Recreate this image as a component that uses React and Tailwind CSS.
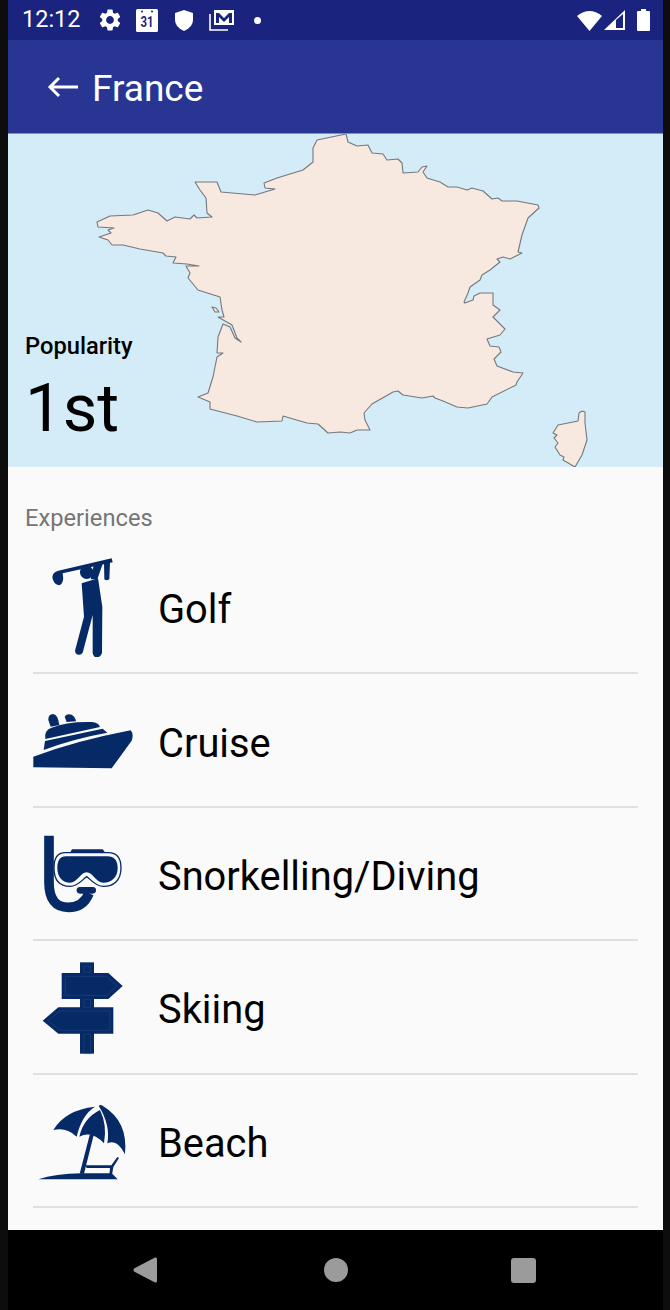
import React from "react";

const NAVY = "#062a66";

const FRANCE =
  "M346 134 L317 140 L313 148 L313 162 L303 170 L277 178 L264 183 L265 188 L275 189 L255 195 L221 192 L217 182 L195 182 L200 190 L206 198 L207 213 L212 217 L197 218 L194 215 L190 219 L175 217 L167 221 L158 213 L148 210 L133 215 L110 216 L97 222 L98 227 L114 228 L108 230 L111 233 L99 237 L108 240 L112 245 L123 245 L140 249 L163 253 L166 256 L176 257 L173 263 L187 264 L199 266 L186 266 L190 273 L188 278 L198 290 L220 297 L222 310 L224 317 L218 317 L232 325 L237 338 L241 342 L235 338 L230 327 L223 324 L218 337 L217 353 L223 353 L217 357 L213 377 L208 393 L198 397 L210 402 L210 409 L237 416 L257 422 L282 421 L283 416 L307 423 L318 424 L328 433 L340 432 L350 433 L357 430 L370 430 L365 420 L364 413 L372 404 L393 392 L398 391 L403 395 L422 398 L433 396 L435 398 L443 401 L457 407 L468 408 L487 404 L492 397 L516 385 L517 382 L523 373 L513 372 L497 366 L494 359 L501 352 L499 347 L490 346 L487 339 L500 335 L505 329 L493 317 L500 310 L493 305 L493 293 L480 293 L474 296 L473 300 L465 303 L464 302 L468 293 L470 287 L480 280 L482 275 L490 270 L500 262 L497 259 L503 257 L510 259 L522 253 L518 252 L522 235 L528 218 L539 208 L538 205 L517 201 L502 201 L498 198 L492 199 L483 191 L472 188 L467 190 L457 187 L448 187 L440 182 L427 178 L423 172 L427 166 L422 167 L418 172 L403 173 L402 163 L398 159 L387 160 L383 154 L372 153 L368 145 L357 146 L348 142 Z";

const CORSICA =
  "M582 411 L585 412 L585 423 L587 440 L582 455 L575 467 L563 460 L564 457 L560 455 L555 447 L558 443 L554 438 L557 435 L553 433 L558 425 L578 421 L579 413 Z";

const GolfIcon = () => (
  <svg viewBox="39 21 300 300" className="w-[100px] h-[100px]" fill={NAVY}>
    <path d="M115 62 L275 25 L278 37 L128 70 Q134 100 118 106 Q100 104 97 82 Q98 66 115 62 Z" />
    <circle cx="200" cy="67" r="20" />
    <path d="M222 42 L250 36 L232 88 L212 88 Z" />
    <path d="M252 38 L270 36 L268 88 Q260 94 253 88 Z" />
    <path d="M185 100 L234 85 L247 170 L246 310 Q240 324 226 322 Q219 318 218 310 L218 195 L188 308 Q178 320 167 310 L165 302 L192 200 Z" />
  </svg>
);

const CruiseIcon = () => (
  <svg viewBox="39 420 300 300" className="w-[100px] h-[100px]" fill={NAVY}>
    <path d="M85 510 Q84 492 100 492 Q114 494 118 525 L92 530 Z" />
    <path d="M134 500 Q140 490 155 494 Q166 500 168 514 L140 516 Z" />
    <path d="M76 567 Q72 540 95 533 Q140 514 215 516 Q236 518 240 531 Z" />
    <path d="M71 600 L75 573 L248 536 L262 548 Q160 566 71 600 Z" />
    <path d="M40 620 Q170 572 332 541 Q342 552 335 572 L275 655 L40 652 Z" />
  </svg>
);

const SnorkelIcon = () => (
  <svg viewBox="39 -3 300 300" className="w-[100px] h-[100px]">
    <path d="M87 35 V175 Q87 250 145 250 Q190 250 207 208" fill="none" stroke={NAVY} strokeWidth="29" />
    <rect x="170" y="189" width="58" height="20" rx="10" fill={NAVY} />
    <path d="M150 86 L156 76 H248 L256 86 Z" fill={NAVY} />
    <path d="M135 86 H265 C292 86 303 105 303 132 C303 170 280 187 250 187 C225 187 215 168 200 158 C185 168 175 187 150 187 C120 187 102 170 102 132 C102 105 112 86 135 86 Z" fill="#fafafa" stroke={NAVY} strokeWidth="4" />
    <path d="M138 97 H262 C283 97 293 110 293 132 C293 160 275 176 250 176 C228 176 218 145 200 145 C182 145 172 176 150 176 C128 176 112 160 112 132 C112 110 120 97 138 97 Z" fill={NAVY} />
  </svg>
);

const SignIcon = () => (
  <svg viewBox="39 396 300 300" className="w-[100px] h-[100px]" fill={NAVY}>
    <rect x="180" y="412" width="42" height="274" />
    <path d="M125 444 H265 L308 483 L265 522 H125 Z" />
    <path d="M115 547 H280 V626 H115 L68 587 Z" />
    <g fill="none" stroke="#2c4a83" strokeWidth="1.5">
      <path d="M136 455 H260 L292 483 L260 511 H136 Z" />
      <path d="M120 558 H270 V616 H120 L85 587 Z" />
      <path d="M192 424 H212 V442 H192 Z" />
      <path d="M192 524 H212 V547 H192 Z" />
      <path d="M192 628 H212 V686 H192 Z" />
    </g>
  </svg>
);

const BeachIcon = () => (
  <svg viewBox="39 -15 300 300" className="w-[100px] h-[100px]" fill={NAVY}>
    <path d="M100 105 Q135 45 225 35 Q185 60 170 125 Q140 95 100 105 Z" />
    <path d="M240 45 Q190 70 178 125 Q215 105 252 145 Q262 90 240 45 Z" />
    <path d="M236 32 Q242 27 250 34 Q325 80 315 178 Q292 130 262 145 Q272 90 236 32 Z" />
    <path d="M209 120 L221 120 L192 236 L179 236 Z" />
    <path d="M55 253 Q105 236 185 235 H275 L293 253 Z" />
    <path d="M196 211 H274 L292 186 L297 189 L280 216 L276 240 H268 L270 219 H200 Z" />
    <path d="M210 224 H268 V228 H210 Z" fill="#fafafa" />
  </svg>
);

const experiences = [
  { name: "Golf", Icon: GolfIcon },
  { name: "Cruise", Icon: CruiseIcon },
  { name: "Snorkelling/Diving", Icon: SnorkelIcon },
  { name: "Skiing", Icon: SignIcon },
  { name: "Beach", Icon: BeachIcon },
];

const StatusBar = () => (
  <div className="h-[40px] shrink-0 bg-[#1a237e] flex items-center text-white">
    <span className="ml-[14px] w-[58px] text-[23.5px] leading-none">12:12</span>
    <svg viewBox="0 0 24 24" className="ml-[17px] w-[26px] h-[26px]" fill="#fff">
      <path d="M19.14 12.94c.04-.3.06-.61.06-.94 0-.32-.02-.64-.07-.94l2.03-1.58a.49.49 0 0 0 .12-.61l-1.92-3.32a.488.488 0 0 0-.59-.22l-2.39.96c-.5-.38-1.03-.7-1.62-.94l-.36-2.54a.484.484 0 0 0-.48-.41h-3.84c-.24 0-.43.17-.47.41l-.36 2.54c-.59.24-1.13.57-1.62.94l-2.39-.96c-.22-.08-.47 0-.59.22L2.74 8.87c-.12.21-.08.47.12.61l2.03 1.58c-.05.3-.09.63-.09.94s.02.64.07.94l-2.03 1.58a.49.49 0 0 0-.12.61l1.92 3.32c.12.22.37.29.59.22l2.39-.96c.5.38 1.03.7 1.62.94l.36 2.54c.05.24.24.41.48.41h3.84c.24 0 .44-.17.47-.41l.36-2.54c.59-.24 1.13-.56 1.62-.94l2.39.96c.22.08.47 0 .59-.22l1.92-3.32c.12-.22.07-.47-.12-.61l-2.01-1.58zM12 15.6c-1.98 0-3.6-1.62-3.6-3.6s1.62-3.6 3.6-3.6 3.6 1.62 3.6 3.6-1.62 3.6-3.6 3.6z" />
    </svg>
    <svg viewBox="0 0 22 23" className="ml-[13px] w-[22px] h-[23px]">
      <rect width="22" height="23" rx="1.5" fill="#fff" />
      <circle cx="6" cy="2.5" r="1" fill="#1a237e" />
      <circle cx="16" cy="2.5" r="1" fill="#1a237e" />
      <text x="4.5" y="18" fontSize="14" fontWeight="700" fill="#1a237e" textLength="13" lengthAdjust="spacingAndGlyphs">31</text>
    </svg>
    <svg viewBox="0 0 18 21" className="ml-[17px] w-[18px] h-[21px]" fill="#fff">
      <path d="M9 0 L18 3 V10 Q18 17 9 21 Q0 17 0 10 V3 Z" />
    </svg>
    <svg viewBox="0 0 25 22" className="ml-[16px] w-[25px] h-[22px]" fill="none">
      <path d="M5 1 H25 V16 H5 Z" fill="#fff" />
      <path d="M7 4 H10 L15 9 L20 4 H23 V14 H20 V8 L15 13 L10 8 V14 H7 Z" fill="#1a237e" />
      <path d="M1 5 V21 H19" stroke="#fff" strokeWidth="1.6" />
    </svg>
    <span className="ml-[20px] w-[7px] h-[7px] rounded-full bg-white" />
    <svg viewBox="0 0 25 21" className="ml-[316px] w-[25px] h-[21px]" fill="#fff">
      <path d="M0 6 Q12.5 -4 25 6 L12.5 21 Z" />
    </svg>
    <svg viewBox="0 0 21 20" className="ml-[2px] w-[21px] h-[20px]">
      <path d="M0 20 L21 0 V20 Z" fill="#fff" />
      <path d="M12 18 V10 L19 4 V18 Z" fill="#1a237e" />
    </svg>
    <svg viewBox="0 0 13 22" className="ml-[12px] w-[13px] h-[22px]" fill="#fff">
      <path d="M4 0 H9 V2 H12 Q13 2 13 3 V21 Q13 22 12 22 H1 Q0 22 0 21 V3 Q0 2 1 2 H4 Z" />
    </svg>
  </div>
);

const NavBar = () => (
  <div className="h-[80px] shrink-0 bg-black flex items-center">
    <svg viewBox="0 0 24 26" className="ml-[125px] w-[24px] h-[26px]" fill="#9b9b9b">
      <path d="M22 0.5 Q24 0 24 2 V24 Q24 26 22 25.5 L1 14.5 Q0 13 1 11.5 Z" />
    </svg>
    <span className="ml-[167px] w-[24px] h-[24px] rounded-full bg-[#9b9b9b]" />
    <span className="ml-[163px] w-[25px] h-[25px] rounded-[3px] bg-[#9b9b9b]" />
  </div>
);

export default function App() {
  return (
    <div className="w-[670px] h-[1310px] pl-[8px] pr-[7px] bg-[#0d0d0d] flex flex-col font-['Roboto',sans-serif]">
      <StatusBar />

      <div className="h-[94px] shrink-0 bg-[#283593] border-b border-[#7f8fd0] flex items-center text-white">
        <svg viewBox="0 0 32 24" className="ml-[39px] w-[32px] h-[24px]" fill="none" stroke="#fff" strokeWidth="3">
          <path d="M31 12 H3 M12 3 L3 12 L12 21" />
        </svg>
        <span className="ml-[13px] pt-[4px] text-[37px] leading-none">France</span>
      </div>

      <div className="relative h-[333px] shrink-0 bg-[#d3ecf7] overflow-hidden flex flex-col justify-end pl-[17px] pb-[21px]">
        <svg viewBox="8 134 655 333" className="absolute inset-0 w-[655px] h-[333px]" fill="#f7e8e0" stroke="#74787c" strokeWidth="1.1" strokeLinejoin="round">
          <path d={FRANCE} />
          <path d={CORSICA} />
          <path d="M212 307 L216 308 L219 312 L215 312 Z" />
        </svg>
        <span className="relative text-[23.7px] font-medium leading-[26px] text-black">Popularity</span>
        <span className="relative mt-[12px] text-[67px] leading-[75px] text-black">1st</span>
      </div>

      <div className="flex-1 bg-[#fafafa] pt-[38px] overflow-hidden">
        <p className="pl-[17px] h-[36px] text-[23.7px] leading-[26px] text-[#757575]">Experiences</p>
        {experiences.map(({ name, Icon }) => (
          <div key={name} className="mx-[25px] h-[133.4px] border-b-2 border-[#e0e0e0] flex items-center">
            <Icon />
            <span className="ml-[25px] pt-[7px] text-[39.8px] leading-none text-black">{name}</span>
          </div>
        ))}
      </div>

      <NavBar />
    </div>
  );
}
